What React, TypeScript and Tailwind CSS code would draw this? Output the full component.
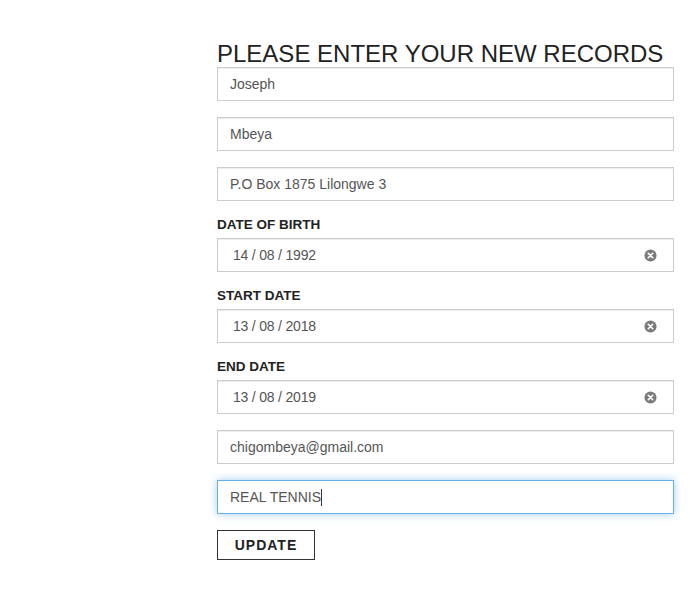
import React from "react";

type Field = {
  kind: "text" | "date";
  value: string;
  label?: string;
  focused?: boolean;
};

const fields: Field[] = [
  { kind: "text", value: "Joseph" },
  { kind: "text", value: "Mbeya" },
  { kind: "text", value: "P.O Box 1875 Lilongwe 3" },
  { kind: "date", label: "DATE OF BIRTH", value: "14 / 08 / 1992" },
  { kind: "date", label: "START DATE", value: "13 / 08 / 2018" },
  { kind: "date", label: "END DATE", value: "13 / 08 / 2019" },
  { kind: "text", value: "chigombeya@gmail.com" },
  { kind: "text", value: "REAL TENNIS", focused: true },
];

function ClearIcon() {
  return (
    <svg className="w-[13px] h-[13px]" viewBox="0 0 14 14">
      <circle cx="7" cy="7" r="6.5" fill="#7a7a7a" />
      <path d="M4.6 4.6l4.8 4.8M9.4 4.6l-4.8 4.8" stroke="#fff" strokeWidth="1.8" strokeLinecap="round" />
    </svg>
  );
}

function FieldBox({ field }: { field: Field }) {
  const border = field.focused
    ? "border-[#66afe9] shadow-[0_0_8px_rgba(102,175,233,0.6)]"
    : "border-[#cccccc] shadow-[inset_0_1px_1px_rgba(0,0,0,0.075)]";
  return (
    <div className="mb-4">
      {field.label && (
        <div className="text-[13.5px] font-bold leading-[16px] text-[#222] mb-[5px]">
          {field.label}
        </div>
      )}
      <div className={`h-[34px] border bg-white flex items-center text-[14px] text-[#555] ${border}`}>
        {field.kind === "date" ? (
          <>
            <span className="pl-[15px] flex-1 tracking-[-0.2px]">{field.value}</span>
            <span className="mr-[16px] flex items-center">
              <ClearIcon />
            </span>
          </>
        ) : (
          <span className="pl-3 flex items-center">
            {field.value}
            {field.focused && <span className="inline-block w-px h-[17px] bg-[#333]" />}
          </span>
        )}
      </div>
    </div>
  );
}

export default function App() {
  return (
    <div className="min-h-[606px] w-[690px] bg-white font-['Liberation_Sans',Arial,sans-serif]">
      <div className="ml-[217px] w-[457px] pt-[41px]">
        <h1 className="text-[24px] leading-[26px] text-[#222] font-normal whitespace-nowrap">
          PLEASE ENTER YOUR NEW RECORDS
        </h1>
        {fields.map((f) => (
          <FieldBox key={f.value} field={f} />
        ))}
        <button
          type="button"
          className="h-[30px] w-[98px] border border-[#333] bg-white text-[14px] font-bold tracking-[1px] text-[#222]"
        >
          UPDATE
        </button>
      </div>
    </div>
  );
}
